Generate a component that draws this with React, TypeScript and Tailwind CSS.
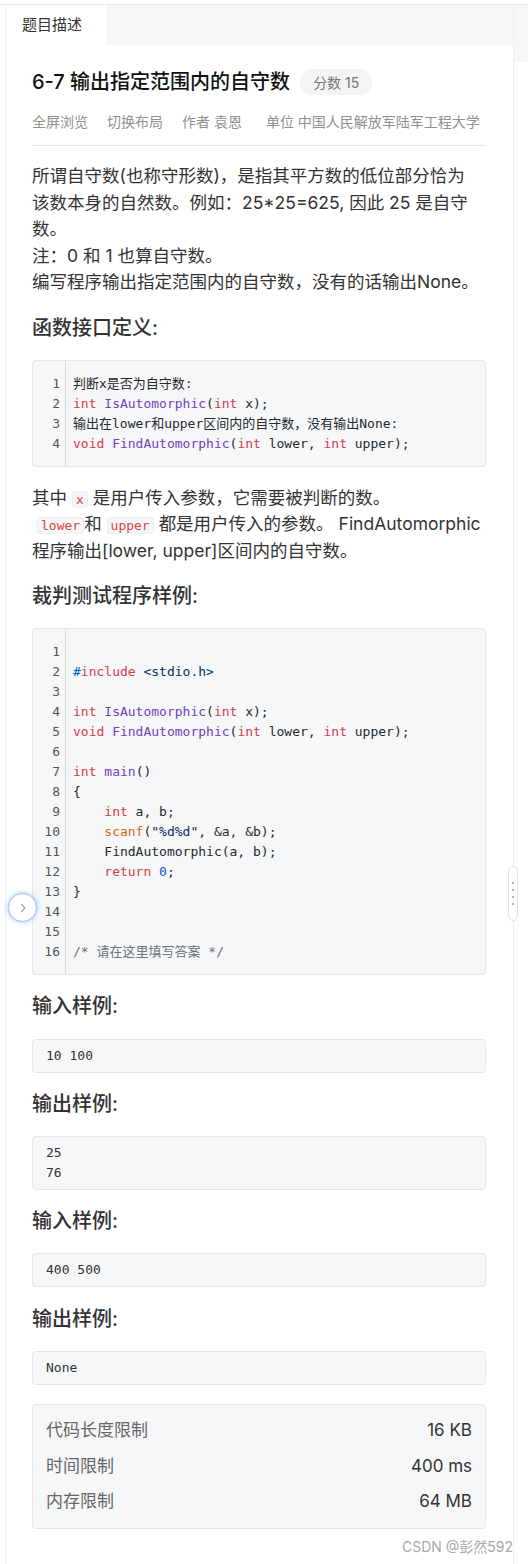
import { type ReactNode } from "react";

const sans = "font-['Inter','Noto_Sans_CJK_SC',sans-serif]";
const mono = "font-['DejaVu_Sans_Mono','Noto_Sans_CJK_SC',monospace]";

const K = ({ children }: { children: ReactNode }) => (
  <span className="text-[#d73a49]">{children}</span>
);
const F = ({ children }: { children: ReactNode }) => (
  <span className="text-[#6f42c1]">{children}</span>
);
const S = ({ children }: { children: ReactNode }) => (
  <span className="text-[#032f62]">{children}</span>
);
const N = ({ children }: { children: ReactNode }) => (
  <span className="text-[#005cc5]">{children}</span>
);
const B = ({ children }: { children: ReactNode }) => (
  <span className="text-[#e36209]">{children}</span>
);
const C = ({ children }: { children: ReactNode }) => (
  <span className="text-[#6a737d]">{children}</span>
);

const interfaceLines: ReactNode[] = [
  <>判断x是否为自守数:</>,
  <>
    <K>int</K> <F>IsAutomorphic</F>(<K>int</K> x);
  </>,
  <>输出在lower和upper区间内的自守数，没有输出None:</>,
  <>
    <K>void</K> <F>FindAutomorphic</F>(<K>int</K> lower, <K>int</K> upper);
  </>,
];

const judgeLines: ReactNode[] = [
  <></>,
  <>
    <N>#</N>
    <K>include</K> <S>&lt;stdio.h&gt;</S>
  </>,
  <></>,
  <>
    <K>int</K> <F>IsAutomorphic</F>(<K>int</K> x);
  </>,
  <>
    <K>void</K> <F>FindAutomorphic</F>(<K>int</K> lower, <K>int</K> upper);
  </>,
  <></>,
  <>
    <K>int</K> <F>main</F>()
  </>,
  <>{"{"}</>,
  <>
    {"    "}
    <K>int</K> a, b;
  </>,
  <>
    {"    "}
    <B>scanf</B>(<S>"%d%d"</S>, &amp;a, &amp;b);
  </>,
  <>{"    "}FindAutomorphic(a, b);</>,
  <>
    {"    "}
    <K>return</K> <N>0</N>;
  </>,
  <>{"}"}</>,
  <></>,
  <></>,
  <>
    <C>/* 请在这里填写答案 */</C>
  </>,
];

function CodeBlock({ lines }: { lines: ReactNode[] }) {
  return (
    <div
      className={`flex rounded-[4px] border border-[#e5e6eb] bg-[#f6f7f9] text-[13px] leading-[20px] text-[#24292e] ${mono}`}
    >
      <div className="w-[33px] shrink-0 border-r border-[#dcdcdc] pt-[13px] pb-[12px] pr-[5px] text-right text-[#555]">
        {lines.map((_, i) => (
          <div key={i} className="h-[20px]">
            {i + 1}
          </div>
        ))}
      </div>
      <div className="flex-1 whitespace-pre pt-[13px] pb-[12px] pl-[7px]">
        {lines.map((l, i) => (
          <div key={i} className="h-[20px]">
            {l}
          </div>
        ))}
      </div>
    </div>
  );
}

function Sample({ lines }: { lines: string[] }) {
  return (
    <div
      className={`rounded-[4px] border border-[#e5e6eb] bg-[#f6f7f9] px-[13px] py-[6px] text-[13px] leading-[20px] text-[#333] ${mono}`}
    >
      {lines.map((l) => (
        <div key={l}>{l}</div>
      ))}
    </div>
  );
}

function Heading({ children }: { children: ReactNode }) {
  return (
    <h3 className="text-[20px] font-medium leading-[30px] text-[#333]">
      {children}
    </h3>
  );
}

function InlineCode({ children }: { children: ReactNode }) {
  return (
    <code
      className={`rounded-[3px] border border-[#eceef0] bg-[#f5f6f7] px-[3px] text-[13px] leading-[16px] text-[#e1423d] ${mono}`}
    >
      {children}
    </code>
  );
}

const limits = [
  { label: "代码长度限制", value: "16 KB" },
  { label: "时间限制", value: "400 ms" },
  { label: "内存限制", value: "64 MB" },
];

export default function App() {
  return (
    <div className={`relative min-h-[1564px] w-[528px] bg-white pt-[4px] ${sans}`}>
      <div className="flex min-h-[1560px] border-t border-[#e8e8e8] pl-[5px]">
        {/* problem panel */}
        <div className="flex w-[509px] flex-col border-l border-r border-[#eeeeee]">
          <div className="flex h-[40px]">
            <div className="flex w-[100px] items-center pl-[16px] text-[15px] text-[#333]">
              题目描述
            </div>
            <div className="flex-1 bg-[#f5f6f7]" />
          </div>

          <div className="flex flex-col pl-[26px] pr-[27px]">
            <div className="mt-[24px] flex items-center gap-[10px]">
              <h1 className="text-[20px] font-medium leading-[26px] text-[#111]">
                6-7 输出指定范围内的自守数
              </h1>
              <span className="flex h-[26px] items-center rounded-full bg-[#f3f4f6] px-[13px] text-[14px] text-[#777]">
                分数 15
              </span>
            </div>

            <div className="mt-[17px] flex border-b border-[#e8e8e8] pb-[13px] text-[14px] leading-[20px] text-[#909090]">
              <span>全屏浏览</span>
              <span className="ml-[19px]">切换布局</span>
              <span className="ml-[19px]">作者 袁恩</span>
              <span className="ml-[24px]">单位 中国人民解放军陆军工程大学</span>
            </div>

            <div className="mt-[17px] whitespace-nowrap text-[17.5px] leading-[26.5px] text-[#333]">
              <p>
                所谓自守数(也称守形数)，是指其平方数的低位部分恰为
                <br />
                该数本身的自然数。例如：25*25=625, 因此 25 是自守
                <br />
                数。
              </p>
              <p>注：0 和 1 也算自守数。</p>
              <p>编写程序输出指定范围内的自守数，没有的话输出None。</p>
            </div>

            <div className="mt-[17px]">
              <Heading>函数接口定义:</Heading>
            </div>
            <div className="mt-[17px]">
              <CodeBlock lines={interfaceLines} />
            </div>

            <p className="mt-[18px] whitespace-nowrap text-[17.5px] leading-[26.5px] text-[#333]">
              其中 <InlineCode>x</InlineCode> 是用户传入参数，它需要被判断的数。
              <br />
              <span className="ml-[5px]" />
              <InlineCode>lower</InlineCode>和 <InlineCode>upper</InlineCode>{" "}
              都是用户传入的参数。 FindAutomorphic
              <br />
              程序输出[lower, upper]区间内的自守数。
            </p>

            <div className="mt-[17px]">
              <Heading>裁判测试程序样例:</Heading>
            </div>
            <div className="mt-[17px]">
              <CodeBlock lines={judgeLines} />
            </div>

            <div className="mt-[16px]">
              <Heading>输入样例:</Heading>
            </div>
            <div className="mt-[18px]">
              <Sample lines={["10 100"]} />
            </div>

            <div className="mt-[16px]">
              <Heading>输出样例:</Heading>
            </div>
            <div className="mt-[17px]">
              <Sample lines={["25", "76"]} />
            </div>

            <div className="mt-[16px]">
              <Heading>输入样例:</Heading>
            </div>
            <div className="mt-[17px]">
              <Sample lines={["400 500"]} />
            </div>

            <div className="mt-[17px]">
              <Heading>输出样例:</Heading>
            </div>
            <div className="mt-[17px]">
              <Sample lines={["None"]} />
            </div>

            <div className="mt-[19px] rounded-[4px] border border-[#e5e6eb] bg-[#f6f7f9] px-[13px] py-[8px]">
              {limits.map((r) => (
                <div
                  key={r.label}
                  className="flex h-[35.5px] items-center justify-between text-[17px]"
                >
                  <span className="text-[#666]">{r.label}</span>
                  <span className="text-[#333]">{r.value}</span>
                </div>
              ))}
            </div>
          </div>
        </div>

        {/* right side strip */}
        <div className="flex flex-1 flex-col">
          <div className="h-[57px] bg-[#f5f6f7]" />
        </div>
      </div>

      {/* collapse button */}
      <div className="absolute left-[8px] top-[893px] flex h-[29px] w-[29px] items-center justify-center rounded-full border-[1.5px] border-[#9cc3f5] bg-white shadow-[0_0_4px_rgba(64,150,255,0.55)]">
        <svg width="10" height="10" viewBox="0 0 10 10" fill="none">
          <path
            d="M3.5 1.5 L7 5 L3.5 8.5"
            stroke="#a0a4aa"
            strokeWidth="1.3"
            strokeLinecap="round"
            strokeLinejoin="round"
          />
        </svg>
      </div>

      {/* resize handle */}
      <div className="absolute left-[508px] top-[866px] flex h-[55px] w-[10px] flex-col items-center justify-center gap-[5px] rounded-full border border-[#e3e3e3] bg-white">
        {[0, 1, 2, 3].map((i) => (
          <span key={i} className="h-[2px] w-[2px] rounded-full bg-[#9a9a9a]" />
        ))}
      </div>

      {/* watermark */}
      <div className="absolute right-[15px] top-[1537px] text-[14px] leading-[20px] text-[#a8a8a8]">
        CSDN @彭然592
      </div>
    </div>
  );
}
